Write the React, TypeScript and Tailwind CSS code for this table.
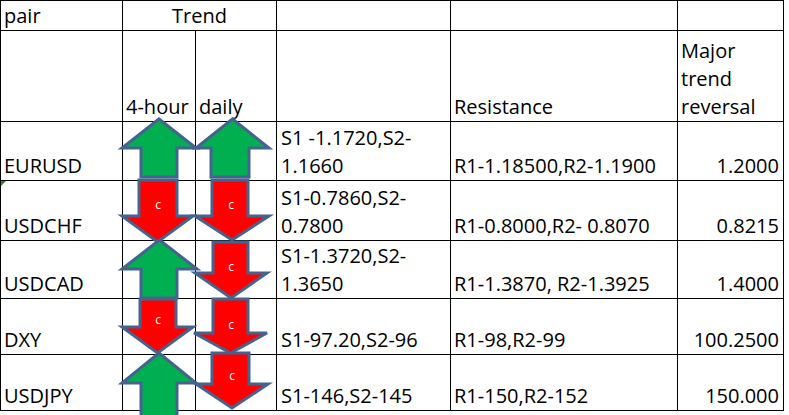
const OUTLINE = "#44648f";

type ArrowProps = {
	dir: "up" | "down";
	l: number;
	r: number;
	t: number;
	mid: number;
	b: number;
	sl: number;
	sr: number;
	label?: [number, number];
};

const Arrow = ({ dir, l, r, t, mid, b, sl, sr, label }: ArrowProps) => {
	const tip = (l + r) / 2;
	const pts =
		dir === "up"
			? [[tip, t], [r, mid], [sr, mid], [sr, b], [sl, b], [sl, mid], [l, mid]]
			: [[sl, t], [sr, t], [sr, mid], [r, mid], [tip, b], [l, mid], [sl, mid]];
	return (
		<g>
			<polygon
				points={pts.map((p) => p.join(",")).join(" ")}
				fill={dir === "up" ? "#00b050" : "#ff0000"}
				stroke={OUTLINE}
				strokeWidth={3}
				strokeLinejoin="miter"
			/>
			{label && (
				<text
					x={label[0]}
					y={label[1] + 4}
					textAnchor="middle"
					fill="#ffffff"
					fontSize={12}
					fontFamily="'Open Sans', sans-serif"
				>
					c
				</text>
			)}
		</g>
	);
};

const arrows: ArrowProps[] = [
	{ dir: "up", l: 122, r: 196, t: 119, mid: 148, b: 177, sl: 141, sr: 177 },
	{ dir: "up", l: 196, r: 269, t: 119, mid: 148, b: 177, sl: 211, sr: 249 },
	{ dir: "down", l: 122, r: 193, t: 180, mid: 216, b: 242, sl: 139, sr: 177, label: [158, 205] },
	{ dir: "down", l: 195, r: 269, t: 180, mid: 216, b: 240, sl: 212, sr: 248, label: [231, 205] },
	{ dir: "up", l: 122, r: 197, t: 240, mid: 269, b: 298, sl: 141, sr: 177 },
	{ dir: "down", l: 195, r: 267, t: 242, mid: 273, b: 298, sl: 213, sr: 248, label: [231, 267] },
	{ dir: "down", l: 122, r: 193, t: 299, mid: 327, b: 353, sl: 140, sr: 176, label: [158, 320] },
	{ dir: "down", l: 194, r: 267, t: 299, mid: 333, b: 353, sl: 213, sr: 248, label: [231, 325] },
	{ dir: "up", l: 122, r: 196, t: 353, mid: 383, b: 430, sl: 141, sr: 177 },
	{ dir: "down", l: 196, r: 268, t: 353, mid: 384, b: 408, sl: 212, sr: 249, label: [232, 376] },
];

const rows = [
	{ pair: "EURUSD", s: ["S1 -1.1720,S2-", "1.1660"], r: "R1-1.18500,R2-1.1900", m: "1.2000" },
	{ pair: "USDCHF", s: ["S1-0.7860,S2-", "0.7800"], r: "R1-0.8000,R2- 0.8070", m: "0.8215" },
	{ pair: "USDCAD", s: ["S1-1.3720,S2-", "1.3650"], r: "R1-1.3870, R2-1.3925", m: "1.4000" },
	{ pair: "DXY", s: ["S1-97.20,S2-96"], r: "R1-98,R2-99", m: "100.2500" },
	{ pair: "USDJPY", s: ["S1-146,S2-145"], r: "R1-150,R2-152", m: "150.000" },
];

const cell = "flex items-end border-r border-b border-black px-[3px] whitespace-nowrap";

export default function App() {
	return (
		<div className="relative w-[789px] h-[415px] overflow-hidden bg-white text-black font-['Open_Sans',sans-serif] text-[20px] leading-[28px]">
			<div className="grid w-[784px] grid-cols-[122px_73px_81px_174px_227px_106px] grid-rows-[30px_91px_59px_60px_58px_56px_56px] border-l border-t border-black">
				<div className={cell}>pair</div>
				<div className={`${cell} col-span-2 justify-center`}>Trend</div>
				<div className={cell} />
				<div className={cell} />
				<div className={cell} />

				<div className={cell} />
				<div className={cell}>4-hour</div>
				<div className={cell}>daily</div>
				<div className={cell} />
				<div className={cell}>Resistance</div>
				<div className={cell}>
					<span>
						Major
						<br />
						trend
						<br />
						reversal
					</span>
				</div>

				{rows.map((row) => (
					<div key={row.pair} className="contents">
						<div className={cell}>{row.pair}</div>
						<div className={cell} />
						<div className={cell} />
						<div className={`${cell} pl-[4px]`}>
							<span>
								{row.s.map((line, i) => (
									<span key={i} className="block">
										{line}
									</span>
								))}
							</span>
						</div>
						<div className={cell}>{row.r}</div>
						<div className={`${cell} justify-end pr-[4px]`}>{row.m}</div>
					</div>
				))}
			</div>

			<svg
				className="absolute left-0 top-0 pointer-events-none"
				width={789}
				height={415}
				viewBox="0 0 789 415"
			>
				<polygon points="1,181 6,181 1,186" fill="#1e8e3e" />
				{arrows.map((a, i) => (
					<Arrow key={i} {...a} />
				))}
			</svg>
		</div>
	);
}
